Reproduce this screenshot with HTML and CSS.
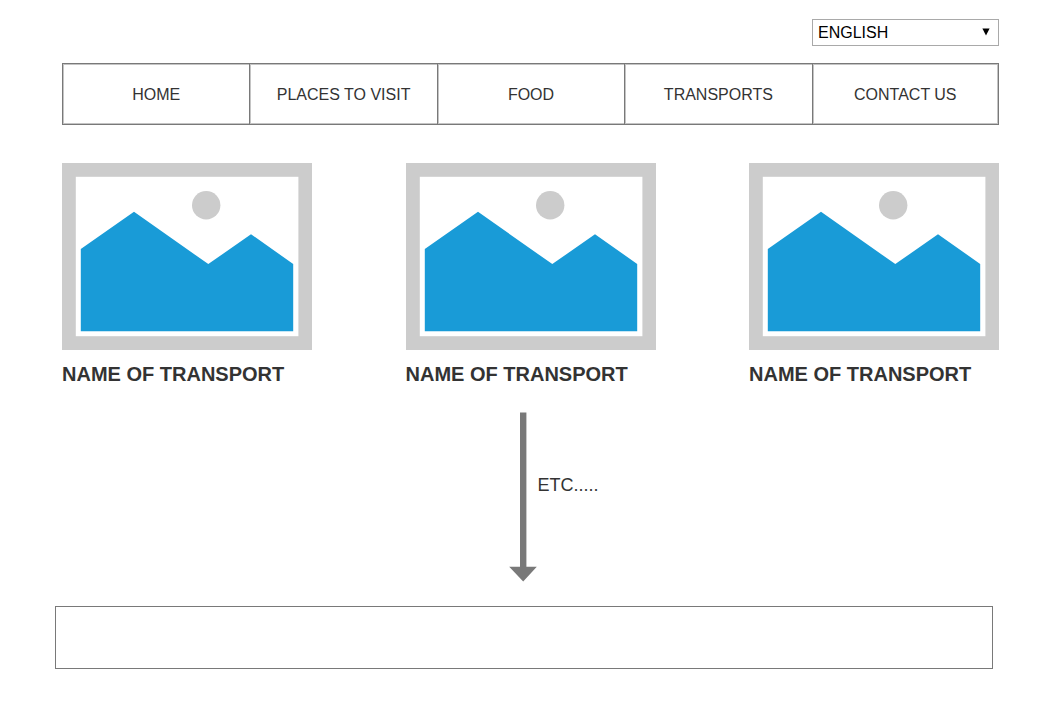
FILE: index.html
```html
<!DOCTYPE html>
<html lang="en">
<head>
<meta charset="utf-8">
<meta name="viewport" content="width=device-width, initial-scale=1">
<title>Transports</title>
<link rel="stylesheet" href="styles.css">
</head>
<body>
<svg class="symbols" aria-hidden="true">
  <symbol id="placeholder" viewBox="0 0 250 187">
    <rect width="250" height="187" fill="#ccc"/>
    <rect x="13.8" y="13.8" width="222.6" height="159.4" fill="#fff"/>
    <circle cx="144.2" cy="42.2" r="14.2" fill="#ccc"/>
    <path d="M18.8 86 72 48.8l74.3 52.3L189 71.2l42.2 29.8v67.3H18.8z" fill="#199bd7"/>
  </symbol>
</svg>
<header class="page header">
  <div class="language">
    <select class="language-select" aria-label="Language">
      <option>ENGLISH</option>
    </select>
    <svg class="language-arrow" viewBox="0 0 8 8" aria-hidden="true"><path d="M0.4 0.5h7.2L4 7.5z"/></svg>
  </div>
  <nav class="nav">
    <a class="nav-link" href="#">HOME</a>
    <a class="nav-link" href="#">PLACES TO VISIT</a>
    <a class="nav-link" href="#">FOOD</a>
    <a class="nav-link" href="#">TRANSPORTS</a>
    <a class="nav-link" href="#">CONTACT US</a>
  </nav>
</header>
<main class="page">
  <div class="cards">
    <article class="card">
      <svg class="card-image" viewBox="0 0 250 187" aria-hidden="true"><use href="#placeholder"/></svg>
      <h2 class="card-title">NAME OF TRANSPORT</h2>
    </article>
    <article class="card">
      <svg class="card-image" viewBox="0 0 250 187" aria-hidden="true"><use href="#placeholder"/></svg>
      <h2 class="card-title">NAME OF TRANSPORT</h2>
    </article>
    <article class="card">
      <svg class="card-image" viewBox="0 0 250 187" aria-hidden="true"><use href="#placeholder"/></svg>
      <h2 class="card-title">NAME OF TRANSPORT</h2>
    </article>
  </div>
  <div class="more">
    <svg class="more-arrow" viewBox="0 0 28 170" aria-hidden="true"><path d="M11 .5h6.4v154.2h10.4L14.2 169.5.2 154.7H11z"/></svg>
    <p class="more-text">ETC.....</p>
  </div>
</main>
<footer class="footer"></footer>
</body>
</html>
```
FILE: styles.css
```css
* {
  box-sizing: border-box;
}

body {
  margin: 0;
  background: #fff;
  color: #333;
  font-family: "Liberation Sans", Arial, sans-serif;
  font-size: 16px;
}

.symbols {
  display: none;
}

.page {
  padding: 0 57px 0 62px;
}

.header {
  padding-top: 19px;
}

.language {
  position: relative;
  width: 187px;
  margin-left: auto;
}

.language-select {
  display: block;
  width: 100%;
  height: 27px;
  padding: 0 24px 0 5px;
  appearance: none;
  border: 1px solid #a9a9a9;
  border-radius: 0;
  background: #fff;
  color: #000;
  font: inherit;
}

.language-arrow {
  position: absolute;
  top: 9px;
  right: 9px;
  width: 8px;
  height: 8px;
  pointer-events: none;
}

.nav {
  display: grid;
  grid-template-columns: repeat(5, 1fr);
  margin-top: 17px;
}

.nav-link {
  display: flex;
  align-items: center;
  justify-content: center;
  height: 62px;
  padding-top: 2px;
  border: 1px solid #797979;
  border-right: 0;
  box-shadow: inset 1px 1px #c4c4c4, inset 0 -1px #c4c4c4;
  color: inherit;
  text-decoration: none;
}

.nav-link:last-child {
  border-right: 1px solid #797979;
  box-shadow: inset 0 0 0 1px #c4c4c4;
}

.cards {
  display: flex;
  flex-wrap: wrap;
  justify-content: space-between;
  gap: 24px;
  margin-top: 38px;
}

.card {
  width: 250px;
}

.card-image {
  display: block;
  width: 100%;
}

.card-title {
  margin: 12px 0 0;
  font-size: 20px;
  line-height: 24px;
}

.more {
  display: grid;
  grid-template-columns: 1fr 28px 1fr;
  margin-top: 26px;
  padding-right: 16px;
}

.more-arrow {
  grid-column: 2;
  width: 28px;
  height: 170px;
  fill: #797979;
}

.more-text {
  margin: 62px 0 0;
  padding-left: 1px;
  font-size: 18px;
  line-height: 22px;
}

.footer {
  height: 63px;
  margin: 24px 63px 41px 55px;
  border: 1px solid #797979;
}
```
